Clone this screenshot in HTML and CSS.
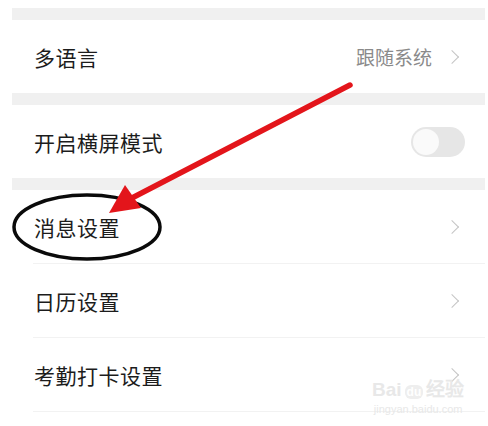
FILE: index.html
```
<!DOCTYPE html>
<html lang="zh-CN">
<head>
    <meta charset="UTF-8">
    <meta name="viewport" content="width=device-width, initial-scale=1.0">
    <title>设置</title>
    <link rel="stylesheet" href="styles.css">
</head>
<body>
    <div id="settings">
        <div class="gap first"></div>
        <div class="row">
            <span class="label">多语言</span>
            <span class="value">跟随系统</span>
            <span class="chevron"></span>
        </div>
        <div class="gap"></div>
        <div class="row">
            <span class="label">开启横屏模式</span>
            <span class="toggle"><span class="knob"></span></span>
        </div>
        <div class="gap"></div>
        <div class="row line">
            <span class="label">消息设置</span>
            <span class="chevron"></span>
        </div>
        <div class="row line">
            <span class="label">日历设置</span>
            <span class="chevron"></span>
        </div>
        <div class="row line">
            <span class="label">考勤打卡设置</span>
            <span class="chevron"></span>
        </div>
    </div>

    <!-- 标注：红色箭头和黑色圈 -->
    <svg class="mark" width="488" height="426" viewBox="0 0 488 426">
        <ellipse cx="87" cy="227" rx="73" ry="32" fill="none" stroke="#0a0a0a" stroke-width="3.5"/>
        <line x1="350" y1="85" x2="130" y2="199" stroke="#e3151b" stroke-width="5.5" stroke-linecap="round"/>
        <polygon points="109,213 125,185 141,208" fill="#e3151b"/>
    </svg>

    <div class="watermark">
        <div class="wm-logo">Bai<span class="wm-du">du</span>经验</div>
        <div class="wm-url">jingyan.baidu.com</div>
    </div>
</body>
</html>
```

FILE: styles.css
```
body {
    margin: 0;
    background: #fff;
    font-family: "Noto Sans CJK SC", "Noto Sans", sans-serif;
    color: #1c1c1c;
    width: 488px;
    height: 426px;
    overflow: hidden;
    position: relative;
}
#settings {
    margin-left: 12px;
    width: 473px;
    padding-top: 8px;
}
.gap {
    height: 12px;
    background: #f0f0f0;
}
.gap.first {
    height: 12px;
}
.row {
    display: flex;
    align-items: center;
    height: 73px;
    padding: 0 24px 0 22px;
    box-sizing: border-box;
}
.row.line {
    height: 74px;
    border-bottom: 1px solid #f2f2f2;
    margin-left: 21px;
    padding-left: 1px;
}
.label {
    font-size: 21px;
    flex: 1;
    letter-spacing: 0.5px;
}
.value {
    font-size: 19px;
    color: #8a8a8a;
    margin-right: 15px;
}
.chevron {
    width: 9px;
    height: 9px;
    border-top: 1.5px solid #c4c4c4;
    border-right: 1.5px solid #c4c4c4;
    transform: rotate(45deg);
    margin-right: 4px;
}
.toggle {
    width: 54px;
    height: 30px;
    border-radius: 15px;
    background: #e6e6e6;
    display: flex;
    align-items: center;
    padding: 2px;
    box-sizing: border-box;
    margin-right: -4px;
}
.knob {
    width: 26px;
    height: 26px;
    border-radius: 50%;
    background: #fafafa;
}
.mark {
    position: absolute;
    left: 0;
    top: 0;
}
.watermark {
    position: absolute;
    left: 372px;
    top: 380px;
    color: #e8e8e8;
    text-align: center;
}
.wm-logo {
    font-family: "Liberation Sans", sans-serif;
    font-size: 19px;
    font-weight: bold;
    line-height: 20px;
}
.wm-du {
    font-size: 12px;
    background: #eeeeee;
    color: #fff;
    border-radius: 6px;
    padding: 0 2px;
    margin: 0 3px;
}
.wm-url {
    font-family: "Liberation Sans", sans-serif;
    font-size: 11px;
    line-height: 14px;
}
```
